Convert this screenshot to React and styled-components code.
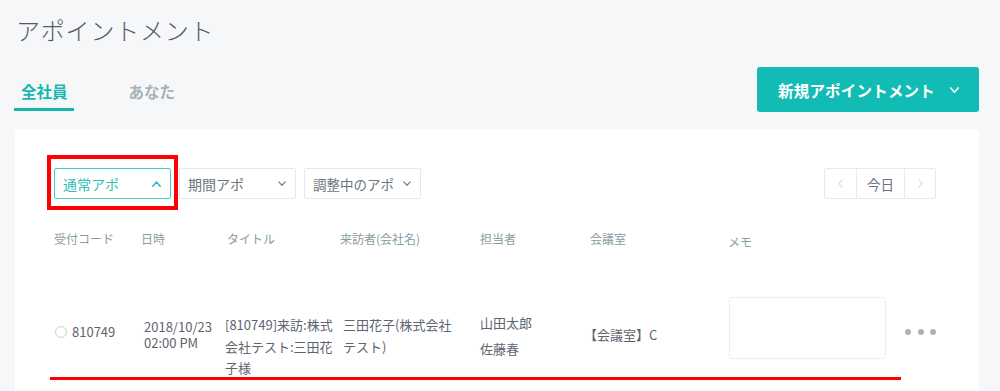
import React from "react";
import styled, { createGlobalStyle } from "styled-components";

const Global = createGlobalStyle`
  html, body { margin: 0; padding: 0; }
  body {
    background: #f6f7f8;
    font-family: "Noto Sans CJK JP", "Noto Sans", sans-serif;
    color: #5c6470;
    overflow: hidden;
  }
  * { box-sizing: border-box; }
`;

const Page = styled.div`
  padding: 14px 21px 0 15px;
  height: 391px;
  display: flex;
  flex-direction: column;
`;

const Title = styled.h1`
  margin: 0;
  padding-left: 1px;
  font-size: 24px;
  line-height: 32px;
  font-weight: 300;
  color: #545a6a;
  letter-spacing: 0.8px;
`;

const TopRow = styled.div`
  margin-top: 21px;
  display: flex;
  justify-content: space-between;
  align-items: flex-start;
`;

const Tabs = styled.div`
  display: flex;
  gap: 48px;
  margin-top: 13px;
  margin-left: -1px;
`;

const Tab = styled.div`
  padding: 0 6px 6px 7px;
  font-size: 15.5px;
  line-height: 22px;
  font-weight: 700;
  color: ${(p) => (p.$active ? "#17b7af" : "#a3b2b7")};
  border-bottom: 3px solid ${(p) => (p.$active ? "#17b7af" : "transparent")};
`;

const PrimaryButton = styled.button`
  width: 222px;
  height: 45px;
  border: none;
  border-radius: 3px;
  background: #12bbb3;
  color: #ffffff;
  font-family: inherit;
  font-size: 15.5px;
  font-weight: 700;
  display: flex;
  align-items: center;
  padding: 0 0 0 21px;
  gap: 15px;
  letter-spacing: 0.2px;
`;

const Card = styled.div`
  margin-top: 17px;
  flex: 1;
  background: #ffffff;
  border-radius: 3px 3px 0 0;
  padding: 39px 43px 0 39px;
`;

const FilterRow = styled.div`
  display: flex;
  justify-content: space-between;
  align-items: center;
`;

const Filters = styled.div`
  display: flex;
  gap: 8px;
`;

const Highlight = styled.div`
  position: relative;
  &::after {
    content: "";
    position: absolute;
    left: -7px;
    right: -7px;
    top: -13px;
    bottom: -11px;
    border: 4px solid #ff0000;
    pointer-events: none;
  }
`;

const Select = styled.div`
  width: 117px;
  height: 31px;
  border: 1px solid ${(p) => (p.$active ? "#43cbc4" : "#e6e9eb")};
  border-radius: 2px;
  display: flex;
  align-items: center;
  justify-content: space-between;
  padding: 0 9px 0 8px;
  font-size: ${(p) => (p.$small ? "13.5px" : "14px")};
  color: ${(p) => (p.$active ? "#2fbfb8" : "#6b7480")};
  white-space: nowrap;
`;

const Pager = styled.div`
  display: flex;
  height: 31px;
  border: 1px solid #e8eaec;
  border-radius: 2px;
`;

const PagerCell = styled.div`
  width: ${(p) => p.$w}px;
  display: flex;
  align-items: center;
  justify-content: center;
  font-size: 13.5px;
  color: #6b7480;
  & + & { border-left: 1px solid #e8eaec; }
`;

const COLS = "87px 86px 113px 140px 110px 138px 176px auto";

const HeaderRow = styled.div`
  margin-top: 32px;
  display: grid;
  grid-template-columns: ${COLS};
  align-items: start;
`;

const HeadCell = styled.div`
  font-size: 12px;
  line-height: 16px;
  color: #8a9ca2;
  margin-top: ${(p) => p.$top || 0}px;
`;

const DataRow = styled.div`
  position: relative;
  margin-top: 47px;
  display: grid;
  grid-template-columns: ${COLS};
  align-items: start;
  font-size: 13px;
  color: #5c6470;
`;

const Cell = styled.div`
  margin-top: ${(p) => p.$top || 0}px;
  margin-left: ${(p) => p.$shift || 0}px;
  line-height: ${(p) => p.$lh || 20}px;
  max-width: ${(p) => (p.$max ? `${p.$max}px` : "none")};
  word-break: break-all;
`;

const CodeCell = styled.div`
  margin-top: 25px;
  display: flex;
  align-items: center;
  gap: 5px;
  line-height: 20px;
  margin-left: 1px;
`;

const Radio = styled.span`
  width: 12px;
  height: 12px;
  border-radius: 50%;
  border: 1px solid #c9ced2;
  display: inline-block;
`;

const Memo = styled.div`
  width: 157px;
  height: 62px;
  border: 1px solid #e9eef2;
  border-radius: 4px;
  margin-left: 1px;
`;

const Dots = styled.div`
  margin-top: 32px;
  display: flex;
  gap: 6.5px;
  margin-left: 1px;
`;

const Dot = styled.span`
  width: 6px;
  height: 6px;
  border-radius: 50%;
  background: #a7b4ba;
`;

const RedLine = styled.div`
  position: absolute;
  left: -4px;
  top: 80px;
  width: 851px;
  height: 3px;
  background: #ff0000;
`;

const Chevron = ({ up, color, w = 8, h = 5, sw = 1.3 }) => (
  <svg width={w} height={h} viewBox={`0 0 ${w} ${h}`} fill="none">
    <polyline
      points={up ? `0.8,${h - 0.8} ${w / 2},0.9 ${w - 0.8},${h - 0.8}` : `0.8,0.9 ${w / 2},${h - 0.8} ${w - 0.8},0.9`}
      stroke={color}
      strokeWidth={sw}
      strokeLinecap="round"
      strokeLinejoin="round"
    />
  </svg>
);

const SideChevron = ({ left }) => (
  <svg width="5" height="9" viewBox="0 0 5 9" fill="none">
    <polyline
      points={left ? "4.2,0.8 0.8,4.5 4.2,8.2" : "0.8,0.8 4.2,4.5 0.8,8.2"}
      stroke="#d3d8db"
      strokeWidth="1.1"
      strokeLinecap="round"
      strokeLinejoin="round"
    />
  </svg>
);

export default function App() {
  return (
    <>
      <Global />
      <Page>
        <Title>アポイントメント</Title>
        <TopRow>
          <Tabs>
            <Tab $active>全社員</Tab>
            <Tab>あなた</Tab>
          </Tabs>
          <PrimaryButton>
            新規アポイントメント
            <Chevron color="#ffffff" w={9} h={6} sw={1.6} />
          </PrimaryButton>
        </TopRow>
        <Card>
          <FilterRow>
            <Filters>
              <Highlight>
                <Select $active>
                  通常アポ
                  <Chevron up color="#2fbfb8" w={9} h={6} sw={1.6} />
                </Select>
              </Highlight>
              <Select>
                期間アポ
                <Chevron color="#7a838c" />
              </Select>
              <Select $small>
                調整中のアポ
                <Chevron color="#7a838c" />
              </Select>
            </Filters>
            <Pager>
              <PagerCell $w={31}>
                <SideChevron left />
              </PagerCell>
              <PagerCell $w={48}>今日</PagerCell>
              <PagerCell $w={31}>
                <SideChevron />
              </PagerCell>
            </Pager>
          </FilterRow>

          <HeaderRow>
            <HeadCell>受付コード</HeadCell>
            <HeadCell>日時</HeadCell>
            <HeadCell>タイトル</HeadCell>
            <HeadCell>来訪者(会社名)</HeadCell>
            <HeadCell>担当者</HeadCell>
            <HeadCell>会議室</HeadCell>
            <HeadCell $top={3}>メモ</HeadCell>
            <HeadCell />
          </HeaderRow>

          <DataRow>
            <CodeCell>
              <Radio />
              810749
            </CodeCell>
            <Cell $top={22} $shift={3} $lh={16}>
              2018/10/23
              <br />
              02:00 PM
            </Cell>
            <Cell $top={17} $shift={-2} $lh={21.5} $max={112}>
              [810749]来訪:株式会社テスト:三田花子様
            </Cell>
            <Cell $top={17} $shift={3} $lh={21.5} $max={114}>
              三田花子(株式会社テスト)
            </Cell>
            <Cell $top={13} $lh={26}>
              山田太郎
              <br />
              佐藤春
            </Cell>
            <Cell $top={28} $shift={-6}>
              【会議室】C
            </Cell>
            <Memo />
            <Dots>
              <Dot />
              <Dot />
              <Dot />
            </Dots>
            <RedLine />
          </DataRow>
        </Card>
      </Page>
    </>
  );
}
